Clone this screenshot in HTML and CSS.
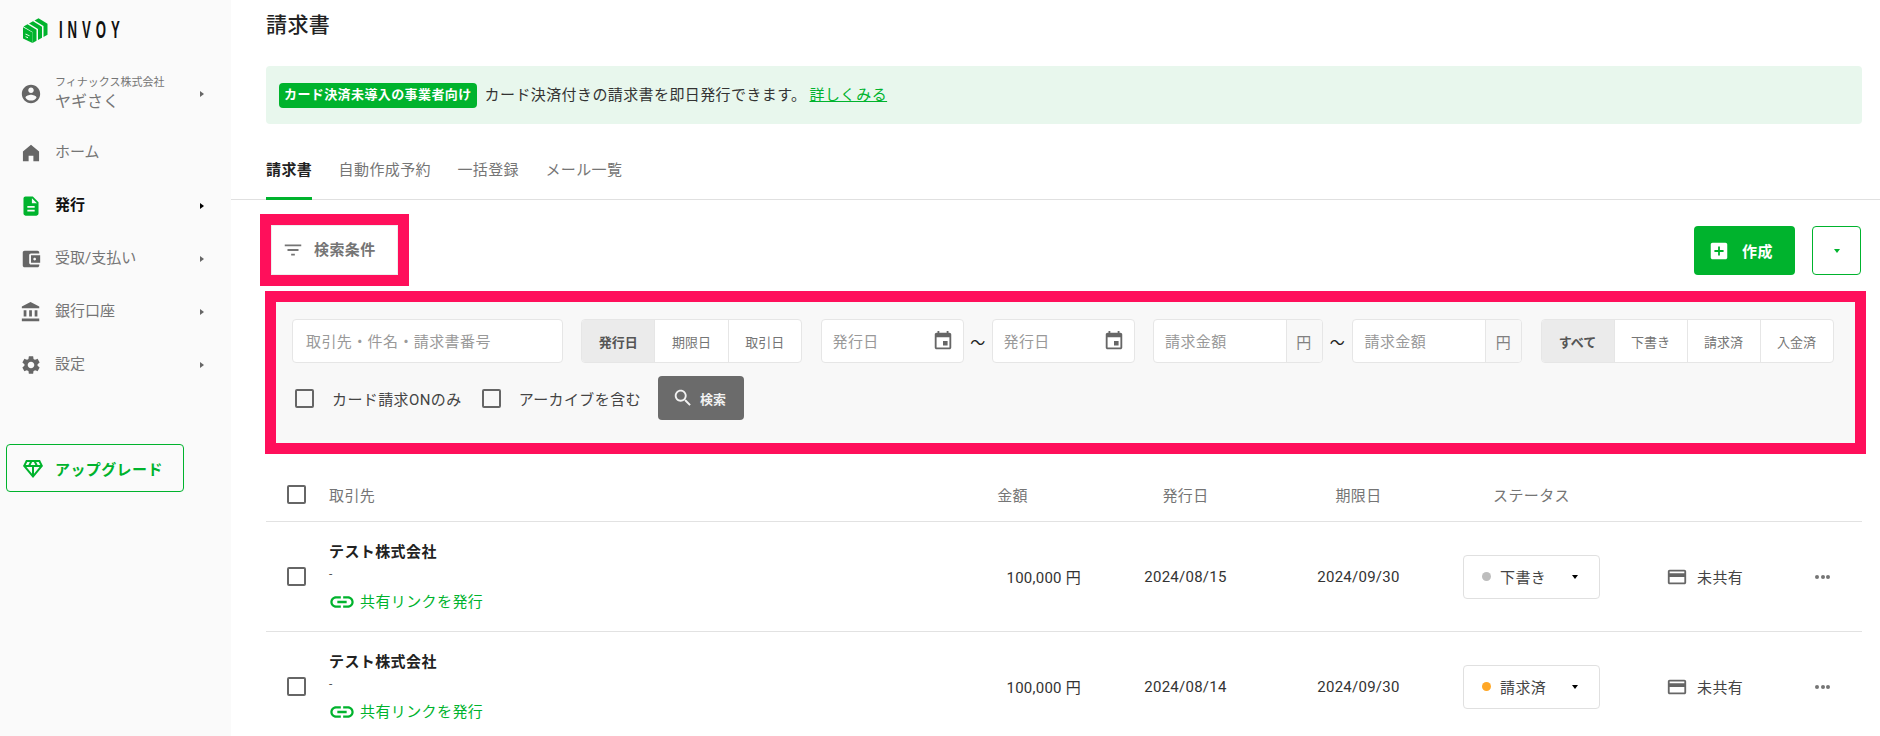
FILE: index.html
```html
<!DOCTYPE html>
<html lang="ja">
<head>
<meta charset="utf-8">
<title>請求書 - INVOY</title>
<link rel="stylesheet" href="styles.css">
</head>
<body>
<div class="app">
  <aside class="sidebar">
    <div class="logo">
      <svg class="logo-mark" viewBox="3 3 25 26" width="25" height="26">
        <path class="g" d="M3 13.2 12.5 18.6V29L3 24.6Z"/>
        <path class="g" d="M3.5 12.5 7.5 10.3 16.5 15.8V26.8L12.5 29V18Z"/>
        <path class="g" d="M9 9.5 13 7.3 22 12.8V23.8L18 26V15Z"/>
        <path class="g" d="M14.5 6.5 18.5 4.3 27.5 9.8V20.8L23.5 23V12Z"/>
        <path class="w" d="M5.5 19.6 9.5 21.4V22.3L5.5 20.5ZM5.5 22.2 8 23.3V24.2L5.5 23.1Z"/>
      </svg>
      <span class="logo-text">INVOY</span>
    </div>
    <nav class="nav">
      <a class="nav-item">
        <svg class="ni" viewBox="0 0 24 24"><path d="M12 2C6.48 2 2 6.48 2 12s4.48 10 10 10 10-4.48 10-10S17.52 2 12 2zm0 3c1.66 0 3 1.34 3 3s-1.34 3-3 3-3-1.34-3-3 1.34-3 3-3zm0 14.2c-2.5 0-4.71-1.28-6-3.22.03-1.99 4-3.08 6-3.08 1.99 0 5.97 1.09 6 3.08-1.29 1.94-3.5 3.22-6 3.22z"/></svg>
        <span class="nl user"><small>フィナックス株式会社</small>ヤギさく</span>
        <i class="arrow"></i>
      </a>
      <a class="nav-item">
        <svg class="ni" viewBox="0 0 24 24"><path d="M12 3 20.8 10.4V21H14.6V15H9.4V21H3.2V10.4Z"/></svg>
        <span class="nl">ホーム</span>
      </a>
      <a class="nav-item active">
        <svg class="ni" viewBox="0 0 24 24"><path d="M14 1.5H6c-1.2 0-2.2 1-2.2 2.2v16.6c0 1.2 1 2.2 2.2 2.2h12c1.2 0 2.2-1 2.2-2.2V8l-6.2-6.5zm2 16.5H8v-2h8v2zm0-4H8v-2h8v2zm-3-5V3.5L18.5 9H13z"/></svg>
        <span class="nl">発行</span>
        <i class="arrow"></i>
      </a>
      <a class="nav-item">
        <svg class="ni" viewBox="0 0 24 24"><path d="M21 18v1c0 1.1-.9 2-2 2H5c-1.11 0-2-.9-2-2V5c0-1.1.89-2 2-2h14c1.1 0 2 .9 2 2v1h-9c-1.11 0-2 .9-2 2v8c0 1.1.89 2 2 2h9zm-9-2h10V8H12v8zm4-2.5c-.83 0-1.5-.67-1.5-1.5s.67-1.5 1.5-1.5 1.5.67 1.5 1.5-.67 1.5-1.5 1.5z"/></svg>
        <span class="nl">受取/支払い</span>
        <i class="arrow"></i>
      </a>
      <a class="nav-item">
        <svg class="ni" viewBox="0 0 24 24"><path d="M4 10v7h3v-7H4zm6 0v7h3v-7h-3zM2 22h19v-3H2v3zm14-12v7h3v-7h-3zm-4.5-9L2 6v2h19V6l-9.5-5z"/></svg>
        <span class="nl">銀行口座</span>
        <i class="arrow"></i>
      </a>
      <a class="nav-item">
        <svg class="ni" viewBox="0 0 24 24"><path d="M19.14 12.94c.04-.3.06-.61.06-.94 0-.32-.02-.64-.07-.94l2.03-1.58c.18-.14.23-.41.12-.61l-1.92-3.32c-.12-.22-.37-.29-.59-.22l-2.39.96c-.5-.38-1.03-.7-1.62-.94l-.36-2.54c-.04-.24-.24-.41-.48-.41h-3.84c-.24 0-.43.17-.47.41l-.36 2.54c-.59.24-1.13.57-1.62.94l-2.39-.96c-.22-.08-.47 0-.59.22L2.74 8.87c-.12.21-.08.47.12.61l2.03 1.58c-.05.3-.09.63-.09.94s.02.64.07.94l-2.03 1.58c-.18.14-.23.41-.12.61l1.92 3.32c.12.22.37.29.59.22l2.39-.96c.5.38 1.03.7 1.62.94l.36 2.54c.05.24.24.41.48.41h3.84c.24 0 .44-.17.47-.41l.36-2.54c.59-.24 1.13-.56 1.62-.94l2.39.96c.22.08.47 0 .59-.22l1.92-3.32c.12-.22.07-.47-.12-.61l-2.01-1.58zM12 15.6c-1.98 0-3.6-1.62-3.6-3.6s1.62-3.6 3.6-3.6 3.6 1.62 3.6 3.6-1.62 3.6-3.6 3.6z"/></svg>
        <span class="nl">設定</span>
        <i class="arrow"></i>
      </a>
    </nav>
    <a class="upgrade">
      <svg viewBox="0 0 24 24" width="24" height="24"><path d="M19 3H5L2 9l10 12L22 9l-3-6zM9.62 8l1.5-3h1.76l1.5 3H9.62zM11 10v6.68L5.44 10H11zm2 0h5.56L13 16.68V10zm6.26-2h-2.65l-1.5-3h2.65l1.5 3zM6.24 5h2.65l-1.5 3H4.74l1.5-3z"/></svg>
      <span>アップグレード</span>
    </a>
  </aside>

  <main class="main">
    <h1 class="title">請求書</h1>
    <div class="banner">
      <span class="badge">カード決済未導入の事業者向け</span>
      <span class="banner-text">カード決済付きの請求書を即日発行できます。</span>
      <a class="banner-link">詳しくみる</a>
    </div>
    <div class="tabs">
      <a class="tab on">請求書</a>
      <a class="tab">自動作成予約</a>
      <a class="tab">一括登録</a>
      <a class="tab">メール一覧</a>
    </div>
    <div class="toolbar">
      <button class="filter-toggle">
        <svg viewBox="0 0 24 24" width="22" height="22"><path d="M10 18h4v-2h-4v2zM3 6v2h18V6H3zm3 7h12v-2H6v2z"/></svg>
        <span>検索条件</span>
      </button>
      <div class="actions">
        <button class="create">
          <svg viewBox="0 0 24 24" width="22" height="22"><path d="M19 3H5c-1.11 0-2 .9-2 2v14c0 1.1.89 2 2 2h14c1.1 0 2-.9 2-2V5c0-1.1-.9-2-2-2zm-2 10h-4v4h-2v-4H7v-2h4V7h2v4h4v2z"/></svg>
          <span>作成</span>
        </button>
        <button class="more"><i class="caret green"></i></button>
      </div>
    </div>

    <section class="panel">
      <div class="panel-row">
        <div class="field w-keyword"><span class="ph">取引先・件名・請求書番号</span></div>
        <div class="seg seg-date">
          <span class="seg-btn on">発行日</span><span class="seg-btn">期限日</span><span class="seg-btn">取引日</span>
        </div>
        <div class="range">
          <div class="field w-date"><span class="ph">発行日</span>
            <svg class="cal" viewBox="0 0 24 24"><path d="M17 12h-5v5h5v-5zM16 1v2H8V1H6v2H5c-1.11 0-1.99.9-1.99 2L3 19c0 1.1.89 2 2 2h14c1.1 0 2-.9 2-2V5c0-1.1-.9-2-2-2h-1V1h-2zm3 18H5V8h14v11z"/></svg>
          </div>
          <span class="tilde">〜</span>
          <div class="field w-date"><span class="ph">発行日</span>
            <svg class="cal" viewBox="0 0 24 24"><path d="M17 12h-5v5h5v-5zM16 1v2H8V1H6v2H5c-1.11 0-1.99.9-1.99 2L3 19c0 1.1.89 2 2 2h14c1.1 0 2-.9 2-2V5c0-1.1-.9-2-2-2h-1V1h-2zm3 18H5V8h14v11z"/></svg>
          </div>
        </div>
        <div class="range">
          <div class="field w-amount"><span class="ph">請求金額</span><span class="unit">円</span></div>
          <span class="tilde">〜</span>
          <div class="field w-amount"><span class="ph">請求金額</span><span class="unit">円</span></div>
        </div>
        <div class="seg seg-status">
          <span class="seg-btn on">すべて</span><span class="seg-btn">下書き</span><span class="seg-btn">請求済</span><span class="seg-btn">入金済</span>
        </div>
      </div>
      <div class="panel-row second">
        <label class="check"><i class="box"></i>カード請求ONのみ</label>
        <label class="check"><i class="box"></i>アーカイブを含む</label>
        <button class="search">
          <svg viewBox="0 0 24 24" width="22" height="22"><path d="M15.5 14h-.79l-.28-.27C15.41 12.59 16 11.11 16 9.5 16 5.91 13.09 3 9.5 3S3 5.91 3 9.5 5.91 16 9.5 16c1.61 0 3.09-.59 4.23-1.57l.27.28v.79l5 4.99L20.49 19l-4.99-5zm-6 0C7.01 14 5 11.99 5 9.5S7.01 5 9.5 5 14 7.01 14 9.5 11.99 14 9.5 14z"/></svg>
          <span>検索</span>
        </button>
      </div>
    </section>

    <section class="table">
      <div class="tr head">
        <div class="c-check"><i class="box"></i></div>
        <div class="c-name">取引先</div>
        <div class="c-amount">金額</div>
        <div class="c-date">発行日</div>
        <div class="c-due">期限日</div>
        <div class="c-status">ステータス</div>
      </div>
      <div class="tr row">
        <div class="c-check"><i class="box"></i></div>
        <div class="c-name">
          <div class="client">テスト株式会社</div>
          <div class="subject">-</div>
          <a class="share"><svg viewBox="0 0 24 24" width="28" height="28"><path d="M3.9 12c0-1.71 1.39-3.1 3.1-3.1h4V7H7c-2.76 0-5 2.24-5 5s2.24 5 5 5h4v-1.9H7c-1.71 0-3.1-1.39-3.1-3.1zM8 13h8v-2H8v2zm9-6h-4v1.9h4c1.71 0 3.1 1.39 3.1 3.1s-1.39 3.1-3.1 3.1h-4V17h4c2.76 0 5-2.24 5-5s-2.24-5-5-5z"/></svg>共有リンクを発行</a>
        </div>
        <div class="c-amount num">100,000 円</div>
        <div class="c-date num">2024/08/15</div>
        <div class="c-due num">2024/09/30</div>
        <div class="c-status"><div class="select"><i class="dot gray"></i><span>下書き</span><i class="caret"></i></div></div>
        <div class="c-card"><svg viewBox="0 0 24 24" width="22" height="22"><path d="M20 4H4c-1.11 0-1.99.89-1.99 2L2 18c0 1.11.89 2 2 2h16c1.11 0 2-.89 2-2V6c0-1.11-.89-2-2-2zm0 14H4v-6h16v6zm0-10H4V6h16v2z"/></svg><span>未共有</span></div>
        <div class="c-more"><i></i><i></i><i></i></div>
      </div>
      <div class="tr row">
        <div class="c-check"><i class="box"></i></div>
        <div class="c-name">
          <div class="client">テスト株式会社</div>
          <div class="subject">-</div>
          <a class="share"><svg viewBox="0 0 24 24" width="28" height="28"><path d="M3.9 12c0-1.71 1.39-3.1 3.1-3.1h4V7H7c-2.76 0-5 2.24-5 5s2.24 5 5 5h4v-1.9H7c-1.71 0-3.1-1.39-3.1-3.1zM8 13h8v-2H8v2zm9-6h-4v1.9h4c1.71 0 3.1 1.39 3.1 3.1s-1.39 3.1-3.1 3.1h-4V17h4c2.76 0 5-2.24 5-5s-2.24-5-5-5z"/></svg>共有リンクを発行</a>
        </div>
        <div class="c-amount num">100,000 円</div>
        <div class="c-date num">2024/08/14</div>
        <div class="c-due num">2024/09/30</div>
        <div class="c-status"><div class="select"><i class="dot orange"></i><span>請求済</span><i class="caret"></i></div></div>
        <div class="c-card"><svg viewBox="0 0 24 24" width="22" height="22"><path d="M20 4H4c-1.11 0-1.99.89-1.99 2L2 18c0 1.11.89 2 2 2h16c1.11 0 2-.89 2-2V6c0-1.11-.89-2-2-2zm0 14H4v-6h16v6zm0-10H4V6h16v2z"/></svg><span>未共有</span></div>
        <div class="c-more"><i></i><i></i><i></i></div>
      </div>
    </section>
  </main>
</div>
</body>
</html>
```

FILE: styles.css
```css
* { box-sizing: border-box; }
html, body { margin: 0; height: 736px; overflow: hidden; }
body {
  font-family: Roboto, "Noto Sans CJK JP", sans-serif;
  font-size: 15px;
  color: #333;
  background: #fff;
}
a { text-decoration: none; color: inherit; }
button { font: inherit; letter-spacing: inherit; cursor: pointer; }
i { display: block; font-style: normal; }

.app { display: flex; height: 736px; overflow: hidden; }

/* sidebar */
.sidebar { width: 231px; flex: none; background: #fafafa; padding: 0 6px; }
.logo { display: flex; align-items: center; gap: 11px; height: 60px; padding-left: 17px; }
.logo-mark .g { fill: #00b32d; }
.logo-mark .w { fill: #fff; }
.logo-text { font-family: "Liberation Sans", sans-serif; font-size: 24px; font-weight: 700; letter-spacing: 9px; color: #111; transform: scaleX(.55); transform-origin: left center; white-space: nowrap; }
.nav { display: flex; flex-direction: column; }
.nav-item { display: flex; align-items: center; height: 53px; padding-left: 14px; color: #757575; }
.nav-item:first-child { margin: 7px 0 6px; }
.ni { width: 22px; height: 22px; fill: #666; flex: none; }
.nl { margin: 0 0 1px 13px; flex: 1; font-size: 15px; line-height: 20px; }
.user { font-size: 16px; line-height: 22px; margin-bottom: 0; }
.user small { display: block; font-size: 11px; line-height: 16px; }
.arrow { width: 0; height: 0; border-left: 4.5px solid #666; border-top: 3.5px solid transparent; border-bottom: 3.5px solid transparent; margin-right: 21px; }
.active { color: #111; font-weight: 700; }
.active .ni { fill: #00b32d; }
.active .arrow { border-left-color: #000; }
.upgrade { display: flex; align-items: center; gap: 10px; width: 178px; height: 48px; margin-top: 53px; padding-left: 14px; border: 1px solid #00b32d; border-radius: 4px; color: #00b32d; font-weight: 700; letter-spacing: .4px; }
.upgrade svg { fill: #00b32d; margin-top: 2px; }

/* main */
.main { flex: 1; min-width: 0; display: flex; flex-direction: column; letter-spacing: .4px; }
.main > * { flex: none; }
.title { margin: 0; height: 66px; padding: 9px 0 0 35px; font-size: 21px; line-height: 32px; font-weight: 500; color: #222; }
.banner { display: flex; align-items: center; height: 58px; margin: 0 18px 0 35px; padding-left: 13px; background: #e8f7ed; border-radius: 4px; color: #333; }
.badge { height: 25px; line-height: 24px; padding: 0 5px; background: #00b32d; border-radius: 4px; color: #fff; font-size: 13px; font-weight: 700; white-space: nowrap; }
.banner-text { margin: 0 0 3px 8px; }
.banner-link { margin: 0 0 3px 3px; color: #00b32d; text-decoration: underline; }

.tabs { display: flex; gap: 26.4px; height: 76px; padding: 26px 0 0 35px; border-bottom: 1px solid #e0e0e0; }
.tab { height: 50px; padding-top: 10px; line-height: 20px; color: #757575; }
.tab.on { border-bottom: 3px solid #00b32d; color: #222; font-weight: 700; }

.toolbar { display: flex; justify-content: space-between; align-items: flex-start; height: 102px; padding: 25px 19px 0 40px; }
.filter-toggle { display: flex; align-items: center; gap: 10px; width: 127px; height: 50px; padding: 0 0 3px 10px; background: #fff; border: 1px solid #eee; outline: 11px solid #ff0f5b; color: #757575; font-weight: 700; }
.filter-toggle svg { fill: #757575; margin-top: 3px; }
.actions { display: flex; gap: 17px; margin-top: 1px; }
.create { display: flex; align-items: center; gap: 12px; width: 101px; height: 49px; padding: 0 0 0 14px; background: #00b32d; border: 0; border-radius: 4px; color: #fff; font-weight: 700; }
.create svg { fill: #fff; }
.more { display: flex; align-items: center; justify-content: center; width: 49px; height: 49px; padding: 0; background: #fff; border: 1px solid #00b32d; border-radius: 4px; }

.caret { width: 0; height: 0; border-top: 4px solid #000; border-left: 3.5px solid transparent; border-right: 3.5px solid transparent; }
.caret.green { border-top-color: #00b32d; }

/* filter panel */
.panel { height: 141px; margin: 0 25px 0 45px; padding: 17px 0 0 16px; background: #f8f8f8; outline: 11px solid #ff0f5b; }
.panel-row { display: flex; align-items: center; gap: 19px; height: 44px; }
.panel-row.second { gap: 0; margin-top: 13px; }
.field { display: flex; align-items: center; height: 44px; padding-left: 13px; background: #fff; border: 1px solid #e6e6e6; border-radius: 4px; }
.ph { flex: 1; color: #999; white-space: nowrap; margin-bottom: 2px; }
.w-keyword { width: 271px; margin-right: -1px; }
.w-date { width: 142.5px; padding: 0 9px 0 10.5px; }
.w-amount { width: 170px; padding: 0 0 0 11.5px; overflow: hidden; }
.cal { width: 22px; height: 22px; fill: #666; }
.unit { width: 36px; height: 100%; display: flex; align-items: center; justify-content: center; background: #f8f8f8; border-left: 1px solid #e6e6e6; color: #808080; }
.range { display: flex; align-items: center; }
.range + .range { margin-left: -1px; }
.tilde { width: 28.5px; text-align: center; color: #222; letter-spacing: 0; }
.range + .range .tilde { width: 29.5px; }
.seg { display: flex; height: 44px; background: #fff; border: 1px solid #e6e6e6; border-radius: 4px; overflow: hidden; letter-spacing: 0; }
.seg-date { width: 221px; }
.seg-status { width: 293px; margin-left: -.5px; }
.seg-btn { flex: 1; display: flex; align-items: center; justify-content: center; border-left: 1px solid #e6e6e6; font-size: 13px; color: #757575; }
.seg-btn:first-child { border-left: 0; }
.seg-btn.on { background: #ebebeb; color: #555; font-weight: 700; }
.box { flex: none; width: 19px; height: 19px; border: 2px solid #666; border-radius: 2px; background: #fff; }
.check { display: flex; align-items: center; color: #444; margin-right: 20px; padding-left: 3px; white-space: nowrap; }
.check .box { margin-right: 18px; background: transparent; }
.check + .check { margin-right: 17px; padding-left: 0; }
.search { display: flex; align-items: center; gap: 6px; width: 86px; height: 44px; padding: 0 0 0 14px; background: #6b6b6b; border: 0; border-radius: 4px; color: #f2f2f2; font-size: 13px; font-weight: 700; letter-spacing: 0; }
.search svg { fill: #f2f2f2; }

/* table */
.table { margin: 11px 18px 0 35px; }
.tr {
  display: grid;
  grid-template-columns: 63px 631px 141px 169px 177px 169px 174px 1fr;
  align-items: center;
  border-bottom: 1px solid #e2e2e2;
}
.head { height: 68px; padding-top: 13px; color: #757575; }
.row { height: 110px; }
.c-check { padding-left: 21px; }
.c-amount { text-align: right; padding-right: 73px; }
.row .c-amount { padding-right: 20px; white-space: nowrap; }
.c-date, .c-due, .c-status { text-align: center; }
.num { letter-spacing: .25px; color: #333; }
.client { font-weight: 700; color: #222; line-height: 22px; }
.subject { font-size: 12px; line-height: 22px; color: #555; }
.share { display: flex; align-items: center; gap: 4px; margin-top: 6px; color: #00b32d; line-height: 22px; }
.share svg { fill: #00b32d; margin: -3px 0 -3px -1px; }
.select { display: flex; align-items: center; width: 137px; height: 44px; margin: 0 auto; padding-left: 18px; background: #fff; border: 1px solid #e0e0e0; border-radius: 4px; color: #444; text-align: left; }
.select span { width: 72px; }
.dot { width: 9px; height: 9px; border-radius: 50%; margin-right: 9px; }
.gray { background: #bdbdbd; }
.orange { background: #ffa726; }
.c-card { display: flex; align-items: center; gap: 9px; padding-left: 50px; color: #444; }
.c-card svg { fill: #666; flex: none; }
.c-more { display: flex; gap: 1.5px; padding-left: 25px; }
.c-more i { width: 4px; height: 4px; border-radius: 50%; background: #757575; }
```
